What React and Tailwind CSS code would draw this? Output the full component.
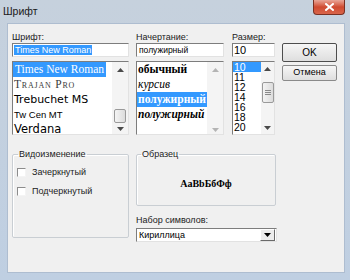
import React from 'react';

const ui = { fontFamily: '"Liberation Sans", Arial, sans-serif' };
const serif = { fontFamily: '"Liberation Serif", "Times New Roman", serif' };

// tiny scrollbar arrow triangle
const Arrow = ({ down, light }) => (
  <svg width="7" height="4" viewBox="0 0 7 4" className="block">
    <path d={down ? 'M0 0 L7 0 L3.5 4 Z' : 'M0 4 L7 4 L3.5 0 Z'} fill={light ? '#b4b4b4' : '#4a4a4a'} />
  </svg>
);

const Thumb = ({ h, grip }) => (
  <div
    className={`w-[12px] ${h} mx-auto rounded-[2px] border border-[#9a9a9a] bg-gradient-to-r from-[#f4f4f4] to-[#dcdcdc] flex flex-col items-center justify-center gap-[1px]`}
  >
    {grip && (
      <>
        <div className="w-[6px] h-px bg-[#8a8a8a]" />
        <div className="w-[6px] h-px bg-[#8a8a8a]" />
        <div className="w-[6px] h-px bg-[#8a8a8a]" />
      </>
    )}
  </div>
);

const Sunken = ({ className = '', children }) => (
  <div
    className={`border border-t-[#7d7d7d] border-l-[#7d7d7d] border-r-[#e2e2e2] border-b-[#e2e2e2] bg-white ${className}`}
  >
    {children}
  </div>
);

const Check = ({ label }) => (
  <div className="flex items-center h-[10px]">
    <div className="ml-[4px] w-[9px] h-[9px] bg-white border border-t-[#8c8c8c] border-l-[#8c8c8c] border-r-[#f4f4f4] border-b-[#f4f4f4]" />
    <span className="ml-[6px] text-[9px] leading-[10px] text-[#222]">{label}</span>
  </div>
);

export default function App() {
  return (
    <div className="w-[350px] h-[280px] flex flex-col bg-gradient-to-b from-[#c6d1dd] to-[#bfcfe2]" style={ui}>
      {/* title bar */}
      <div className="h-[23px] flex justify-between">
        <span className="pl-[3px] pt-[4px] text-[10.5px] leading-[14px] text-[#1a1a1a]">Шрифт</span>
        <div className="mr-[5px] w-[32px] h-[15px] rounded-b-[4px] border border-t-0 border-[#7a3022] bg-gradient-to-b from-[#e8a597] via-[#cf4a30] to-[#d9654a] flex items-center justify-center">
          <svg width="9" height="8" viewBox="0 0 9 8">
            <path d="M1 1 L8 7 M8 1 L1 7" stroke="#fff" strokeWidth="2" strokeLinecap="square" />
          </svg>
        </div>
      </div>

      {/* client area */}
      <div className="ml-[7px] w-[338px] h-[250px] bg-[#f0f0f0] border border-[#aebdd0] pl-[4px] pt-[8px]">
        {/* top row */}
        <div className="flex items-start">
          {/* font column */}
          <div className="w-[117px] flex flex-col">
            <span className="h-[11px] text-[9px] leading-[11px] text-[#222]">Шрифт:</span>
            <Sunken className="h-[14px] flex items-center pl-[1px]">
              <span className="bg-[#3399ff] text-white text-[9px] leading-[10px] px-[1px]">Times New Roman</span>
            </Sunken>
            <Sunken className="mt-[4px] h-[74px] flex overflow-hidden">
              <div className="flex-1 flex flex-col overflow-hidden">
                <div className="h-[15px] shrink-0 flex items-center">
                  <span className="bg-[#3399ff] text-white text-[11.5px] leading-[15px] pl-[2px] pr-[2px]" style={serif}>
                    Times New Roman
                  </span>
                </div>
                <div className="h-[15px] shrink-0 flex items-center pl-[1px] text-[11.5px] text-[#3a3a3a] tracking-[0.8px] [font-variant:small-caps]" style={serif}>
                  Trajan Pro
                </div>
                <div className="h-[16px] shrink-0 flex items-center pl-[1px] text-[11px] text-black" style={{ fontFamily: '"DejaVu Sans", sans-serif' }}>
                  Trebuchet MS
                </div>
                <div className="h-[15px] shrink-0 flex items-center pl-[1px] text-[9.5px] text-black">Tw Cen MT</div>
                <div className="h-[13px] shrink-0 flex items-center pl-[1px] text-[11.5px] leading-[13px] text-black" style={{ fontFamily: '"DejaVu Sans", sans-serif' }}>
                  Verdana
                </div>
              </div>
              <div className="w-[16px] bg-[#f4f4f4] flex flex-col">
                <div className="h-[15px] flex items-center justify-center"><Arrow /></div>
                <div className="flex-1 flex flex-col justify-end"><Thumb h="h-[14px]" /></div>
                <div className="h-[11px] flex items-end justify-center pb-[3px]"><Arrow down /></div>
              </div>
            </Sunken>
          </div>

          {/* style column */}
          <div className="ml-[7px] w-[88px] flex flex-col">
            <span className="h-[11px] text-[9px] leading-[11px] text-[#222]">Начертание:</span>
            <Sunken className="h-[14px] flex items-center pl-[2px]">
              <span className="text-[8.5px] leading-[10px] text-black">полужирный</span>
            </Sunken>
            <Sunken className="mt-[4px] h-[74px] flex overflow-hidden">
              <div className="flex-1 flex flex-col overflow-hidden text-[11.5px] whitespace-nowrap" style={serif}>
                <div className="h-[15px] shrink-0 flex items-center pl-[1px] font-bold">обычный</div>
                <div className="h-[15px] shrink-0 flex items-center pl-[1px] italic">курсив</div>
                <div className="h-[15px] shrink-0 flex items-center">
                  <span className="bg-[#3399ff] text-white font-bold leading-[15px] pl-[1px] pr-[2px]">полужирный</span>
                </div>
                <div className="h-[15px] shrink-0 flex items-center pl-[1px] font-bold italic">полужирный курсив</div>
              </div>
              <div className="w-[16px] bg-[#f4f4f4] flex flex-col justify-between">
                <div className="h-[15px] flex items-center justify-center"><Arrow light /></div>
                <div className="h-[11px] flex items-end justify-center pb-[2px]"><Arrow down light /></div>
              </div>
            </Sunken>
          </div>

          {/* size column */}
          <div className="ml-[8px] w-[43px] flex flex-col">
            <span className="h-[11px] text-[9px] leading-[11px] text-[#222]">Размер:</span>
            <Sunken className="h-[14px] flex items-center pl-[1px]">
              <span className="text-[11px] leading-[12px] text-black">10</span>
            </Sunken>
            <Sunken className="mt-[4px] h-[74px] flex overflow-hidden">
              <div className="flex-1 flex flex-col overflow-hidden text-[10.5px] leading-[10px]">
                <div className="h-[10px] shrink-0 bg-[#3399ff] text-white pl-[1px]">10</div>
                {['11', '12', '14', '16', '18', '20'].map((s) => (
                  <div key={s} className="h-[10px] shrink-0 pl-[1px] text-black">{s}</div>
                ))}
              </div>
              <div className="w-[13px] bg-[#f4f4f4] flex flex-col">
                <div className="h-[13px] flex items-center justify-center"><Arrow /></div>
                <div className="pt-[7px] flex-1"><Thumb h="h-[21px]" grip /></div>
                <div className="h-[12px] flex items-center justify-center"><Arrow down /></div>
              </div>
            </Sunken>
          </div>

          {/* buttons */}
          <div className="ml-[7px] w-[55px] flex flex-col pt-[11px]">
            <button className="h-[19px] rounded-[2px] border border-[#4d4d4d] bg-gradient-to-b from-[#f6f6f6] to-[#dedede] text-[10px] text-black">
              OK
            </button>
            <button className="mt-[3px] h-[16px] rounded-[2px] border border-[#8a8a8a] bg-gradient-to-b from-[#f6f6f6] to-[#dedede] text-[9px] text-black">
              Отмена
            </button>
          </div>
        </div>

        {/* bottom row */}
        <div className="mt-[14px] flex items-start">
          <fieldset className="w-[117px] h-[89px] border border-[#c9ced3] rounded-[2px] shadow-[inset_1px_1px_0_#fff]">
            <legend className="ml-[5px] px-[1px] text-[9px] leading-[11px] text-[#222]">Видоизменение</legend>
            <div className="mt-[7px] flex flex-col gap-[9px]">
              <Check label="Зачеркнутый" />
              <Check label="Подчеркнутый" />
            </div>
          </fieldset>

          <div className="ml-[7px] w-[141px] flex flex-col">
            <fieldset className="w-[140px] h-[57px] border border-[#c9ced3] rounded-[2px] shadow-[inset_1px_1px_0_#fff]">
              <legend className="ml-[4px] px-[1px] text-[9px] leading-[11px] text-[#222]">Образец</legend>
              <div className="h-[44px] pt-[2px] flex items-center justify-center text-[10px] font-bold text-black" style={serif}>
                AaBbБбФф
              </div>
            </fieldset>
            <span className="mt-[9px] h-[11px] text-[9px] leading-[11px] text-[#222]">Набор символов:</span>
            <Sunken className="mt-[2px] h-[14px] flex items-center">
              <span className="flex-1 pl-[2px] text-[9px] leading-[10px] text-black">Кириллица</span>
              <div className="w-[15px] h-[12px] mr-px bg-[#ececec] border border-t-[#fff] border-l-[#fff] border-r-[#6a6a6a] border-b-[#6a6a6a] flex items-center justify-center">
                <svg width="7" height="4" viewBox="0 0 7 4"><path d="M0 0 L7 0 L3.5 4 Z" fill="#000" /></svg>
              </div>
            </Sunken>
          </div>
        </div>
      </div>
    </div>
  );
}
